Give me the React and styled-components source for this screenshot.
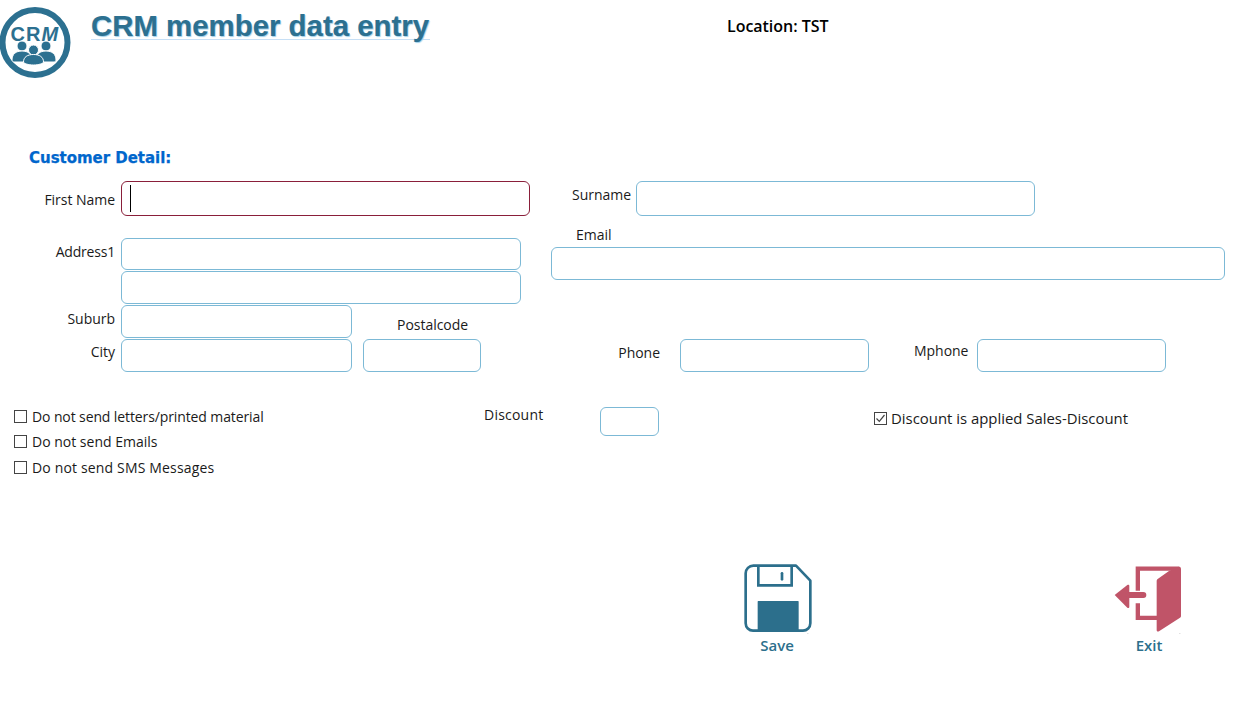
import React from "react";
import styled, { createGlobalStyle } from "styled-components";

const Global = createGlobalStyle`
  html, body { margin: 0; padding: 0; background: #fff; }
  body { font-family: "Open Sans", "Noto Sans", sans-serif; color: #111; overflow: hidden; }
`;
const Page = styled.div`width: 1242px; height: 705px; display: flex; flex-direction: column;`;
const Header = styled.header`display: flex; align-items: flex-start; height: 148px; flex: none;`;
const LogoBox = styled.div`width: 72px; height: 74px; margin-top: 6px; flex: none; svg { display: block; }`;
const Title = styled.h1`
  margin: 10px 0 0 19px; width: 339px; height: 29px; box-sizing: content-box;
  font: bold 29.4px/32px "Liberation Sans", Arial, sans-serif; color: #2c7090;
  -webkit-text-stroke: 0.2px #2c7090;
  text-shadow: 1px 1px 1px #9fd0ea; border-bottom: 1px solid #c6dff5; white-space: nowrap;
`;
const Location = styled.div`margin: 15px 0 0 297px; font-size: 16px; line-height: 22px; font-weight: 600; letter-spacing: -0.03px; color: #000; white-space: nowrap;`;
const SectionTitle = styled.h2`
  margin: 1px 0 14px 29px; height: 18px; font: bold 15px/18px "DejaVu Sans", Verdana, sans-serif;
  letter-spacing: -0.03px; -webkit-text-stroke: 0.25px #0066cc; color: #0066cc; flex: none;
`;
const Row = styled.div`display: flex; align-items: flex-start; margin-top: ${p => p.$mt || 0}px;`;
const Label = styled.label`
  flex: none; box-sizing: border-box; width: ${p => p.$w}px; padding-top: ${p => p.$top || 0}px;
  padding-left: ${p => p.$pl || 0}px; margin-right: ${p => p.$mr || 0}px; margin-left: ${p => p.$ml || 0}px;
  font-size: 14px; line-height: 20px; letter-spacing: ${p => p.$ls || "-0.03px"}; text-align: ${p => p.$align || "right"};
  white-space: nowrap; color: #1a1a1a;
`;
const Input = styled.input`
  flex: none; display: block; box-sizing: border-box; width: ${p => p.$w}px; height: ${p => p.$h}px;
  margin: ${p => p.$mt || 0}px 0 0 ${p => p.$ml || 0}px; padding: 0 8px; background: #fff; outline: none;
  border: 1px solid ${p => (p.$focus ? "#8a1f3a" : "#7cb9d6")}; border-radius: 6px;
`;
const FocusWrap = styled.div`position: relative; flex: none;`;
const Caret = styled.span`position: absolute; left: 9px; top: 4px; width: 1px; height: 27px; background: #000;`;
const Split = styled.div`display: flex; align-items: flex-start;`;
const LeftCol = styled.div`width: 521px; padding-top: 22px; flex: none; display: flex; flex-direction: column; gap: 1px;`;
const RightCol = styled.div`margin-left: 30px; padding-top: 9px; flex: none;`;
const Options = styled.div`display: flex; align-items: flex-start; margin-top: 33px;`;
const CheckList = styled.div`width: 470px; margin: 2px 0 0 14px; display: flex; flex-direction: column; gap: 7.5px; flex: none;`;
const Check = styled.label`
  display: flex; align-items: center; height: 18px; font-size: ${p => p.$size || 14}px; letter-spacing: ${p => p.$ls || 0};
  color: #1a1a1a; white-space: nowrap;
`;
const Box = styled.span`
  flex: none; width: 13px; height: 13px; box-sizing: border-box; border: 1px solid #444; margin-right: ${p => p.$mr}px;
  svg { display: block; }
`;
const DiscountCheck = styled.div`margin: 4px 0 0 215px;`;
const Footer = styled.div`display: flex; margin-top: 88px; padding-left: 744px;`;
const Action = styled.button`
  all: unset; display: flex; flex-direction: column; align-items: center; width: 68px; margin-left: ${p => p.$ml || 0}px;
  color: #2c6f8c; font-size: 15px; font-weight: 600; line-height: 20px;
  svg { display: block; margin-top: ${p => p.$iconTop || 0}px; }
  span { margin-top: ${p => p.$labelTop || 1}px; margin-left: ${p => p.$labelLeft || 0}px; }
`;

const Logo = () => (
  <svg width="72" height="74" viewBox="0 0 72 74" aria-hidden="true">
    <circle cx="35" cy="36.500" r="32.500" fill="none" stroke="#2c7090" strokeWidth="6" />
    <text x="10.500" y="35" fontFamily="Liberation Sans, Arial, sans-serif" fontSize="20" letterSpacing="1" fill="#2c7090" fontWeight="bold">CR<tspan fontStyle="italic">M</tspan></text>
    <g fill="#2c7090" stroke="#fff" strokeWidth="1">
      <circle cx="22" cy="40" r="5" />
      <circle cx="46" cy="40" r="5" />
      <path d="M12 54c0-6 4-9 10-9s10 3 10 9c0 1-1 2-2 2H14c-1 0-2-1-2-2z" />
      <path d="M36 54c0-6 4-9 10-9s10 3 10 9c0 1-1 2-2 2H38c-1 0-2-1-2-2z" />
      <circle cx="33.500" cy="44" r="5" />
      <path d="M23.500 56c0-5 4-7.500 10-7.500s10 2.500 10 7.500c0 1.500-5 3-10 3s-10-1.500-10-3z" />
    </g>
  </svg>
);
const SaveIcon = () => (
  <svg width="68" height="70" viewBox="72 42 204 210" aria-hidden="true">
    <path d="M100 47H228L271 92V220a22 22 0 0 1-22 22H99a22 22 0 0 1-22-22V70a23 23 0 0 1 23-23Z" fill="none" stroke="#2c6f8c" strokeWidth="8" strokeLinejoin="round" />
    <path d="M115 47V106H215V47" fill="none" stroke="#2c6f8c" strokeWidth="8" />
    <rect x="182" y="66" width="8" height="26" rx="4" fill="#2c6f8c" />
    <rect x="113" y="153" width="123" height="90" rx="2" fill="#2c6f8c" />
    <rect x="262" y="250" width="3" height="2" fill="#bbb" />
  </svg>
);
const ExitIcon = () => (
  <svg width="68" height="70" viewBox="42 48 204 210" aria-hidden="true">
    <g fill="#c05468">
      <path d="M237 50a6 6 0 0 1 6 6V198a5 5 0 0 1-3 5L177 244c-4 2-7 0-7-4V92a6 6 0 0 1 3-5L208 62Z" />
      <path d="M44 135 82 105c3-2 6-1 6 3V170c0 3-3 5-6 3Z" />
    </g>
    <g fill="none" stroke="#c05468" strokeWidth="13">
      <path d="M113.500 122V56H238" />
      <path d="M113.500 160V203.500H172" />
    </g>
    <path d="M86 135H130" stroke="#c05468" strokeWidth="18" strokeLinecap="round" />
    <rect x="238" y="250" width="3" height="2" fill="#bbb" />
  </svg>
);
const Tick = () => (
  <svg width="11" height="11" viewBox="0 0 11 11" aria-hidden="true">
    <path d="M1.500 5.500 4.300 8.300 9.500 2" fill="none" stroke="#444" strokeWidth="1.200" />
  </svg>
);

export default function App() {
  return (
    <Page>
      <Global />
      <Header>
        <LogoBox><Logo /></LogoBox>
        <Title>CRM member data entry</Title>
        <Location>Location: TST</Location>
      </Header>
      <SectionTitle>Customer Detail:</SectionTitle>
      <Row>
        <Label $w={115} $mr={6} $top={9}>First Name</Label>
        <FocusWrap>
          <Input $w={409} $h={35} $focus />
          <Caret />
        </FocusWrap>
        <Label $w={101} $mr={5} $top={4}>Surname</Label>
        <Input $w={399} $h={35} />
      </Row>
      <Split>
        <LeftCol>
          <Row>
            <Label $w={115} $mr={6} $top={4} $ls="-0.2px">Address1</Label>
            <Input $w={400} $h={32} />
          </Row>
          <Row>
            <Input $w={400} $h={33} $ml={121} />
          </Row>
        </LeftCol>
        <RightCol>
          <Label as="div" $w={200} $pl={25} $align="left">Email</Label>
          <Input $w={674} $h={33} $mt={2} />
        </RightCol>
      </Split>
      <Row $mt={1}>
        <Label $w={115} $mr={6} $top={4}>Suburb</Label>
        <Input $w={231} $h={33} />
        <Label $w={120} $pl={45} $top={10} $align="left">Postalcode</Label>
      </Row>
      <Row $mt={1}>
        <Label $w={115} $mr={6} $top={3}>City</Label>
        <Input $w={231} $h={33} />
        <Input $w={118} $h={33} $ml={11} />
        <Label $w={179} $mr={20} $top={4}>Phone</Label>
        <Input $w={189} $h={33} />
        <Label $w={55} $ml={45} $mr={8} $top={2} $align="left">Mphone</Label>
        <Input $w={189} $h={33} />
      </Row>
      <Options>
        <CheckList>
          <Check $ls="-0.11px"><Box $mr={5} />Do not send letters/printed material</Check>
          <Check><Box $mr={5} />Do not send Emails</Check>
          <Check $ls="0.16px"><Box $mr={5} />Do not send SMS Messages</Check>
        </CheckList>
        <Label $w={116} $align="left" $ls="0.22px">Discount</Label>
        <Input $w={59} $h={29} $mt={2} />
        <DiscountCheck>
          <Check $size={14.9}><Box $mr={4}><Tick /></Box>Discount is applied Sales-Discount</Check>
        </DiscountCheck>
      </Options>
      <Footer>
        <Action type="button" $labelLeft={-2}><SaveIcon /><span>Save</span></Action>
        <Action type="button" $ml={302} $iconTop={2} $labelTop={-1} $labelLeft={2}><ExitIcon /><span>Exit</span></Action>
      </Footer>
    </Page>
  );
}
